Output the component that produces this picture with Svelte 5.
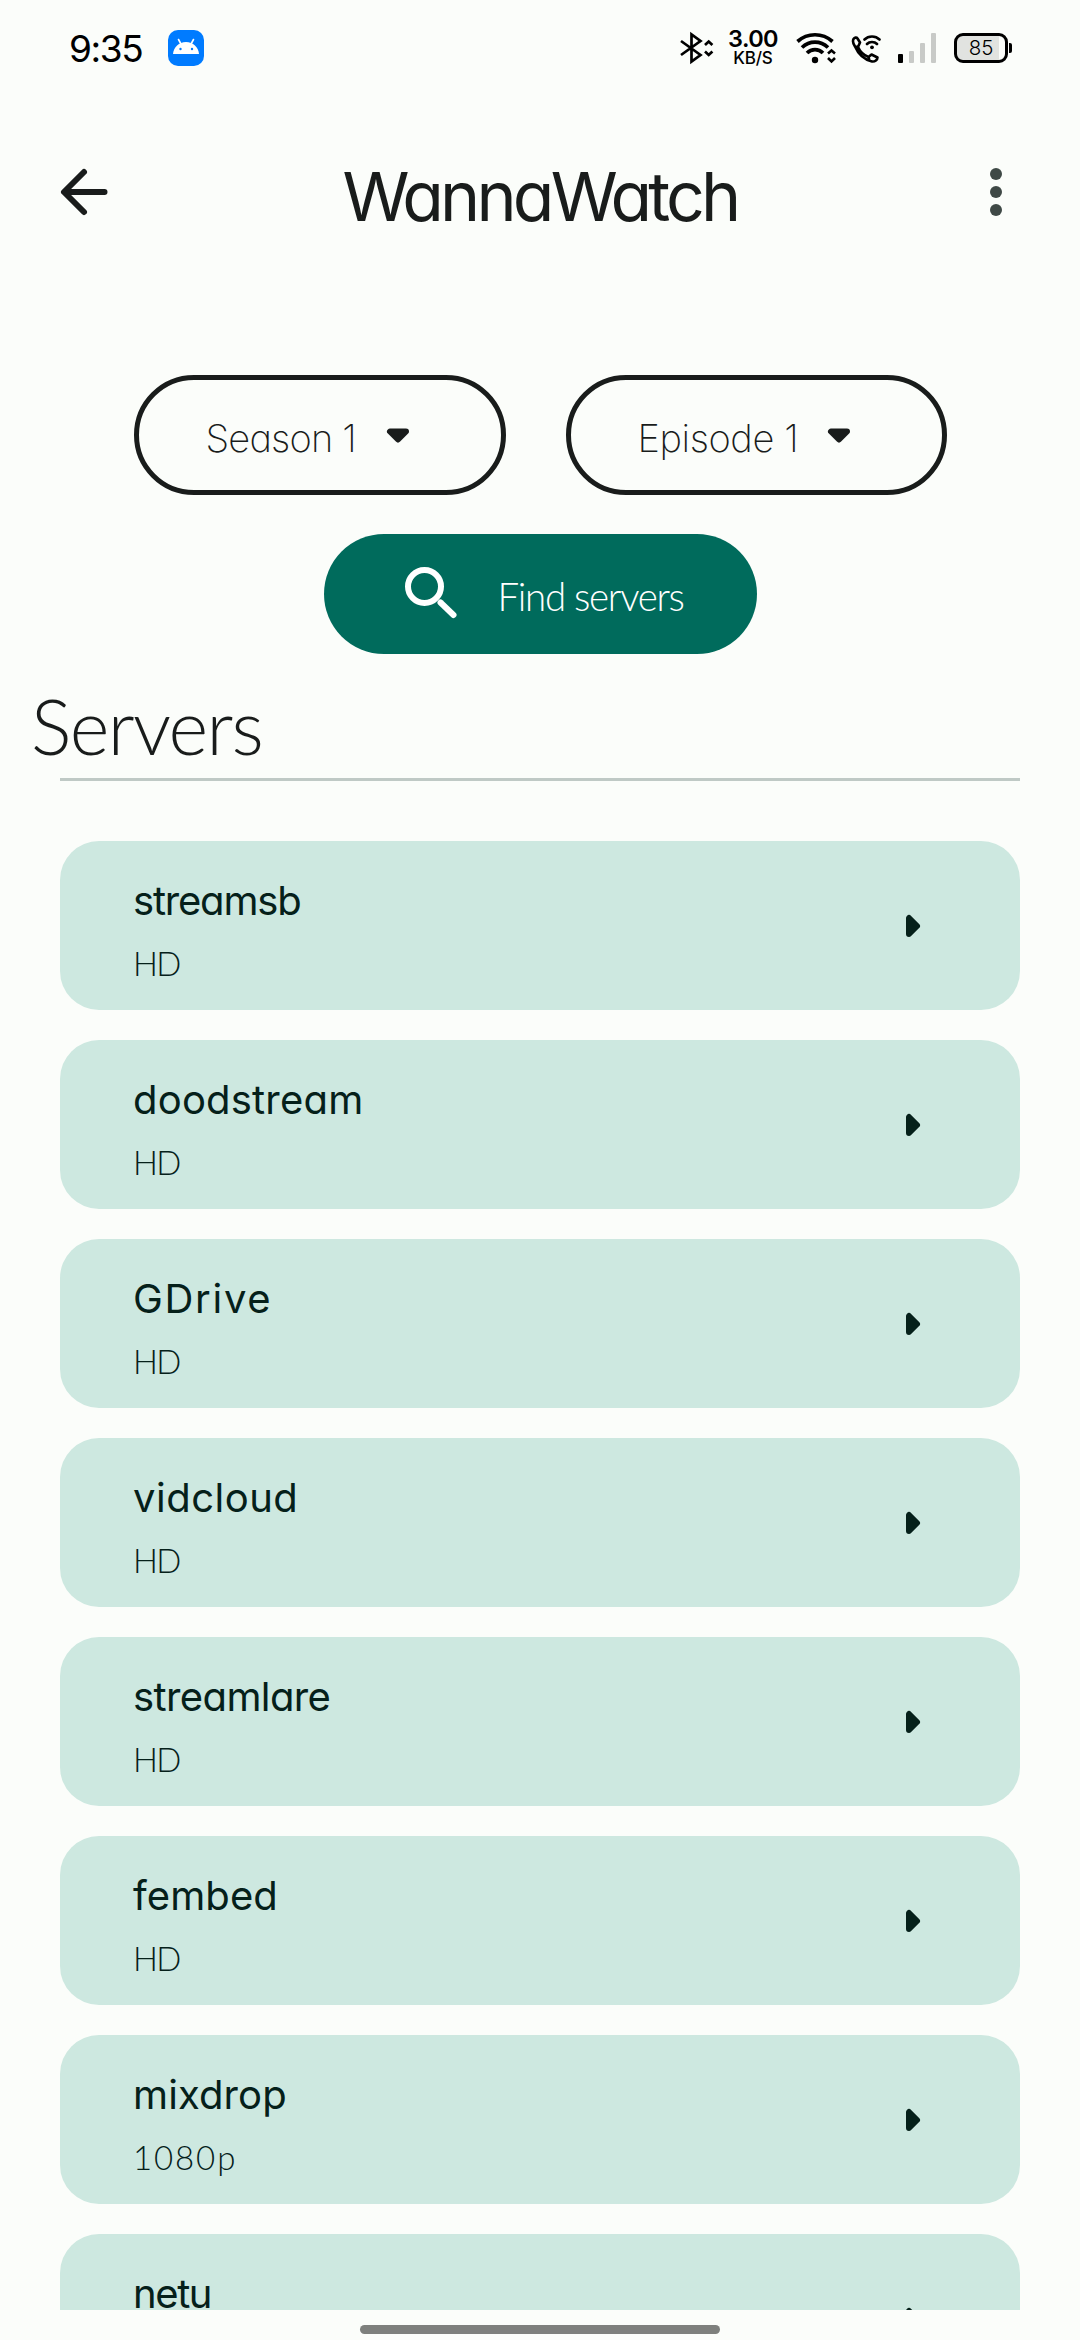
<script>
  const servers = [
    { name: 'streamsb', quality: 'HD', tracking: -1.2 },
    { name: 'doodstream', quality: 'HD', tracking: 0.2 },
    { name: 'GDrive', quality: 'HD', tracking: 1.7 },
    { name: 'vidcloud', quality: 'HD', tracking: 0.5 },
    { name: 'streamlare', quality: 'HD', tracking: -0.6 },
    { name: 'fembed', quality: 'HD', tracking: 0.1 },
    { name: 'mixdrop', quality: '1080p', tracking: 0.1 },
    { name: 'netu', quality: 'HD', tracking: -1.4 }
  ];
</script>

{#snippet caret()}
  <svg class="caret" width="72" height="72" viewBox="0 0 72 72">
    <path d="M28 32.5H44L36 40.5Z" fill="currentColor" stroke="currentColor" stroke-width="6" stroke-linejoin="round" />
  </svg>
{/snippet}

<div class="screen">
  <div class="status">
    <div class="left">
      <span class="time">9:35</span>
      <svg width="36" height="36" viewBox="0 0 36 36">
        <rect width="36" height="36" rx="10" fill="#007bff" />
        <path d="M5 24C5.5 17 11 12 18 12S30.500 17 31 24Z" fill="#fff" />
        <path d="M10.500 9.500L13 14M25.500 9.500L23 14" stroke="#fff" stroke-width="1.600" stroke-linecap="round" />
        <circle cx="12.500" cy="19" r="1.200" fill="#007bff" />
        <circle cx="24" cy="19" r="1.200" fill="#007bff" />
      </svg>
    </div>
    <div class="right">
      <svg class="bt" width="34" height="40" viewBox="0 0 34 40" fill="none" stroke="#000" stroke-width="2.700">
        <path d="M1 13L20.500 27L11.500 33.500V6.500L20.500 13L1 27" />
        <path d="M25 17L28.700 13.500L32.400 17M25 23.500L28.700 27L32.400 23.500" />
      </svg>
      <div class="speed"><span class="num">3.00</span><span class="unit">KB/S</span></div>
      <svg class="wifi" width="40" height="40" viewBox="0 0 40 40" fill="none" stroke="#000" stroke-width="3.700">
        <path d="M1.500 13.500C11.500 4.500 26.500 4.500 36.500 13.500" />
        <path d="M6 19.500C13.500 12.300 24.500 12.300 32 19.500" />
        <path d="M11 25C15.500 20.500 22.500 20.500 27 25" />
        <circle cx="19" cy="32" r="3.200" fill="#000" stroke="none" />
        <path d="M32 25.500L35.500 22.500L39 25.500M32 30L35.500 33.500L39 30" stroke-width="2.600" />
      </svg>
      <svg class="call" width="30" height="40" viewBox="0 0 30 40" fill="none" stroke="#000" stroke-width="2.600" stroke-linejoin="round" stroke-linecap="round">
        <path d="M2.500 11C3.500 9.500 5.500 9 6.500 10.500L9 14.500L7 19L4 18.500C2 15.500 1.500 13 2.500 11ZM4 18.500C7 25.500 13 31.500 21 33.500C24 34 26.500 31.500 26.500 29.500L20.500 26.500L17.500 29L18.500 32.500M7 19C9 23.500 12.500 27 17.500 29" />
        <path d="M13.500 11.500C17.500 7.500 24.500 7.500 28.500 11.500M16 16C18.500 13.300 23.500 13.300 26 16" />
        <circle cx="21" cy="19.300" r="1.900" fill="#000" stroke="none" />
      </svg>
      <svg class="signal" width="38" height="40" viewBox="0 0 38 40">
        <rect x="0" y="26" width="5" height="9" rx="1" fill="#000" />
        <rect x="11" y="23" width="5" height="12" rx="1" fill="#c8cac7" />
        <rect x="22" y="15" width="5" height="20" rx="1" fill="#c8cac7" />
        <rect x="33" y="5" width="5" height="30" rx="1" fill="#c8cac7" />
      </svg>
      <div class="battery"><span class="level">85</span></div>
      <i class="nub"></i>
    </div>
  </div>

  <header>
    <svg width="72" height="72" viewBox="0 0 72 72" fill="none" stroke="#191c1b" stroke-width="6" stroke-linecap="round" stroke-linejoin="round">
      <path d="M56.500 36H17M36 16L16 36L36 56" />
    </svg>
    <h1>WannaWatch</h1>
    <svg width="72" height="72" viewBox="0 0 72 72" fill="#3f4946">
      <circle cx="36" cy="18" r="6" /><circle cx="36" cy="36" r="6" /><circle cx="36" cy="54" r="6" />
    </svg>
  </header>

  <div class="selects">
    <button class="select season"><span>Season 1</span>{@render caret()}</button>
    <button class="select episode"><span>Episode 1</span>{@render caret()}</button>
  </div>

  <button class="find">
    <svg width="72" height="72" viewBox="0 0 72 72" fill="none" stroke="#fff" stroke-width="6">
      <circle cx="29.500" cy="30.500" r="16.500" />
      <path d="M45.500 46.500L58.500 59" stroke-linecap="round" />
    </svg>
    <span>Find servers</span>
  </button>

  <h2>Servers</h2>
  <hr />

  <div class="list">
    {#each servers as server}
      <div class="card">
        <div class="info">
          <div class="name" style="letter-spacing: {server.tracking}px">{server.name}</div>
          <div class="quality" class:wide={server.quality !== 'HD'}>{server.quality}</div>
        </div>
        <svg width="72" height="72" viewBox="0 0 72 72">
          <path d="M33 28V44L41 36Z" fill="#05201a" stroke="#05201a" stroke-width="6" stroke-linejoin="round" />
        </svg>
      </div>
    {/each}
  </div>

  <div class="nav"><i></i></div>
</div>

<style>
  :global(body) {
    background: #fbfdfa;
  }
  .screen {
    width: 1080px;
    height: 2340px;
    overflow: hidden;
    display: flex;
    flex-direction: column;
    background: #fbfdfa;
    color: #191c1b;
    font-family: Lato, 'Open Sans', sans-serif;
  }
  svg {
    display: block;
    flex: none;
  }
  .status {
    height: 96px;
    flex: none;
    display: flex;
    justify-content: space-between;
    align-items: center;
    padding: 0 69px;
    box-sizing: border-box;
    font-family: Inter, sans-serif;
    color: #000;
  }
  .left,
  .right {
    display: flex;
    align-items: center;
  }
  .time {
    width: 99px;
    font-size: 37px;
    font-weight: 380;
    letter-spacing: -1.4px;
  }
  .right {
    height: 40px;
  }
  .speed {
    display: flex;
    flex-direction: column;
    align-items: center;
    width: 54px;
    margin: 0 16px 0 12px;
  }
  .num {
    font-size: 23.5px;
    line-height: 20px;
    font-weight: 600;
    letter-spacing: -0.6px;
  }
  .unit {
    font-size: 17px;
    line-height: 18px;
    font-weight: 500;
    letter-spacing: -0.2px;
  }
  .call {
    margin-left: 15px;
  }
  .signal {
    margin-left: 17px;
  }
  .battery {
    width: 54px;
    height: 30px;
    margin-left: 18px;
    box-sizing: border-box;
    border: 3px solid #000;
    border-radius: 9px;
    background: linear-gradient(90deg, #e1e3e0 42px, #fbfdfa 42px);
    display: flex;
    justify-content: center;
    align-items: center;
  }
  .level {
    font-size: 20.5px;
    line-height: 24px;
    font-weight: 300;
  }
  .nub {
    width: 3px;
    height: 10px;
    margin: 0 -1px 0 1px;
    border-radius: 0 2px 2px 0;
    background: #000;
  }
  header {
    height: 192px;
    flex: none;
    display: flex;
    justify-content: space-between;
    align-items: center;
    padding: 0 48px;
  }
  h1 {
    margin: 0;
    padding-top: 8px;
    font: 380 68px/80px Inter, sans-serif;
    font-feature-settings: 'cv11';
    letter-spacing: -3.8px;
  }
  button {
    font: inherit;
    color: inherit;
    background: none;
    border: 0;
    margin: 0;
    height: 120px;
    border-radius: 60px;
    display: flex;
    align-items: center;
    white-space: nowrap;
    box-sizing: border-box;
    text-align: left;
  }
  .selects {
    display: flex;
    gap: 60px;
    justify-content: center;
    margin-top: 87px;
  }
  .select {
    border: 5px solid #191c1b;
    padding: 0 67px;
  }
  .select span {
    font: 200 38px/48px Inter, sans-serif;
    font-feature-settings: 'cv11';
    letter-spacing: -0.8px;
    padding-top: 6px;
  }
  .caret {
    margin-left: 6px;
  }
  .season span {
    width: 150px;
  }
  .episode span {
    width: 159px;
    letter-spacing: -0.4px;
  }
  .find {
    align-self: center;
    width: 433px;
    flex: none;
    margin-top: 39px;
    padding: 0 0 0 71px;
    gap: 31px;
    background: #006b5c;
    color: #fff;
  }
  .find svg {
    margin-top: -4px;
  }
  .find span {
    font-size: 38.5px;
    line-height: 48px;
    font-weight: 300;
    letter-spacing: -1.3px;
    padding-top: 4px;
  }
  h2 {
    margin: 27px 0 7px 31px;
    font-size: 76px;
    line-height: 90px;
    font-weight: 300;
    letter-spacing: -1.6px;
  }
  hr {
    margin: 0 60px;
    height: 3px;
    flex: none;
    border: 0;
    background: #bfc9c5;
  }
  .list {
    flex: 1;
    min-height: 0;
    overflow: hidden;
    padding: 60px 60px 0;
    display: flex;
    flex-direction: column;
    gap: 30px;
  }
  .card {
    height: 169px;
    flex: none;
    box-sizing: border-box;
    display: flex;
    justify-content: space-between;
    align-items: center;
    padding: 0 72px 0 73px;
    border-radius: 39px;
    background: #cde8e0;
    color: #05201a;
  }
  .name {
    font: 400 40px/60px Inter, sans-serif;
    font-feature-settings: 'cv11';
  }
  .quality {
    margin-top: 10px;
    font-size: 33px;
    line-height: 44px;
    font-weight: 300;
    letter-spacing: -1.6px;
  }
  .quality.wide {
    letter-spacing: 1.9px;
  }
  .info {
    align-self: flex-start;
    padding-top: 30px;
  }
  .nav {
    height: 30px;
    flex: none;
    box-sizing: border-box;
    display: flex;
    justify-content: center;
    align-items: flex-start;
    padding-top: 15px;
  }
  .nav i {
    width: 360px;
    height: 9px;
    border-radius: 5px;
    background: #7e807d;
  }
</style>
